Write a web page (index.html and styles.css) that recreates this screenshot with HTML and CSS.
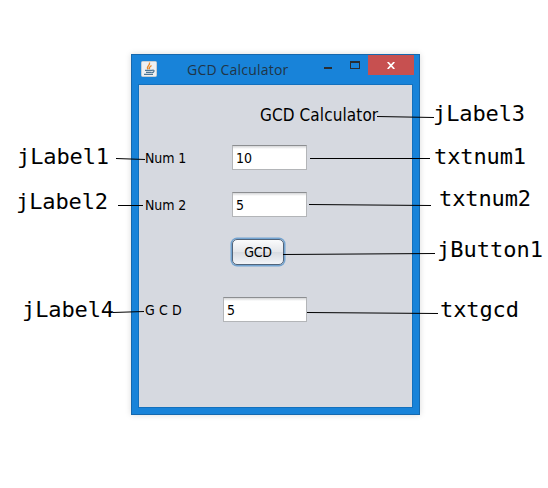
FILE: index.html
```html
<!DOCTYPE html>
<html lang="en">
<head>
<meta charset="utf-8">
<title>GCD Calculator</title>
<link rel="stylesheet" href="styles.css">
</head>
<body>
<main class="window">
  <header class="titlebar">
    <svg class="java" viewBox="0 0 16 16" width="16" height="16">
      <rect x=".5" y=".5" width="15" height="15" rx="1" fill="#eef0f2" stroke="#c8cdd0"/>
      <path d="M7 8.300C4.500 6 9.500 4.500 8.500 1.500M8.500 8.300C7.500 6.500 9 5.500 10.500 4.500" fill="none" stroke="#e8892b" stroke-width="1.300"/>
      <path d="M4 9.300H11M11 9.300c3-.8 2.500 2-.3 2.300M5 11.300H10.500M3 13.300H12" fill="none" stroke="#4f7694" stroke-width="1.200"/>
    </svg>
    <h1 class="caption">GCD Calculator</h1>
    <svg class="controls" viewBox="0 0 50 20" width="50" height="20">
      <rect x="6" y="12" width="8" height="2" fill="#292d31"/>
      <path d="M32 6h10v8h-10zM33 8v5h8v-5z" fill="#292d31" fill-rule="evenodd"/>
    </svg>
    <div class="close">
      <svg viewBox="0 0 8 7" width="8" height="7"><path d="M.7 0L7.300 7M7.300 0L.7 7" stroke="#fff" stroke-width="1.700"/></svg>
    </div>
  </header>
  <section class="pane">
    <h2 class="heading">GCD Calculator</h2>
    <div class="row first"><label class="name">Num 1</label><div class="field">10</div></div>
    <div class="row"><label class="name">Num 2</label><div class="field">5</div></div>
    <button class="action">GCD</button>
    <div class="row result"><label class="name spaced">G C D</label><div class="field wide">5</div></div>
  </section>
</main>
<svg class="notes" viewBox="0 0 548 488" width="548" height="488">
  <g class="leaders">
    <path d="M377 116.500L434 117.500M116 158.500L145 159.500M118 205.500H143M310 158.500H430M309 204.500L431 205.500M283 254.500L435 253.500M307 312.500L438 313.500M113 312.500L144 311.500"/>
  </g>
  <g class="tags">
    <text x="17" y="164" textLength="92">jLabel1</text>
    <text x="16" y="209" textLength="92">jLabel2</text>
    <text x="433" y="121" textLength="92">jLabel3</text>
    <text x="22" y="317" textLength="92">jLabel4</text>
    <text x="434" y="164" textLength="92">txtnum1</text>
    <text x="439" y="206" textLength="92">txtnum2</text>
    <text x="437" y="257" textLength="106">jButton1</text>
    <text x="440" y="317" textLength="79">txtgcd</text>
  </g>
</svg>
</body>
</html>
```
FILE: styles.css
```css
* { box-sizing: border-box; }
body {
  margin: 0;
  padding: 54px 0 0 131px;
  width: 548px;
  height: 488px;
  overflow: hidden;
  background: #fff;
  color: #000;
  font-family: "DejaVu Sans Condensed", "DejaVu Sans", sans-serif;
  font-stretch: condensed;
}
.window {
  width: 289px;
  height: 361px;
  padding: 0 6px 6px;
  border: 1px solid #1668ad;
  background: #1883d9;
  box-shadow: 0 0 6px rgba(0, 0, 0, .15);
}
.titlebar { display: flex; height: 29px; align-items: flex-start; }
.java { margin: 6px 0 0 3px; }
.caption {
  width: 131px;
  margin: 5px 0 0 30px;
  font: 14px/20px "Open Sans", sans-serif;
  letter-spacing: .2px;
  color: #203547;
  white-space: nowrap;
}
.controls { margin-left: 0; }
.close {
  display: flex;
  width: 46px;
  height: 20px;
  margin-left: auto;
  margin-right: -1px;
  align-items: center;
  justify-content: center;
  background: #c75050;
}
.pane {
  height: 324px;
  border: 1px solid #1370bd;
  background: #d6d9e0;
  padding: 18px 0 0 6px;
}
.heading {
  margin: 0 0 0 115px;
  font-size: 17px;
  line-height: 24px;
  font-weight: 400;
  letter-spacing: .1px;
  white-space: nowrap;
}
.row { display: flex; height: 25px; align-items: center; margin-top: 22px; }
.first { margin-top: 18px; }
.name { width: 87px; font-size: 14px; letter-spacing: -.1px; }
.field {
  width: 75px;
  height: 25px;
  padding-left: 3px;
  border: 1px solid #b3b5b8;
  border-top-color: #8c8e91;
  background: linear-gradient(#d4d5d7, #fff 3px);
  font-size: 14px;
  line-height: 24px;
}
.action {
  display: block;
  width: 52px;
  height: 26px;
  margin: 22px 0 0 87px;
  padding: 0;
  border: 1px solid #52647a;
  border-radius: 5px;
  background: linear-gradient(#fafbfc, #e5e7eb 48%, #d8dbe1 52%, #f2f4f8);
  box-shadow: 0 0 0 1.500px #73a4d1;
  color: #000;
  font: 14px/22px "DejaVu Sans Condensed", "DejaVu Sans", sans-serif;
  letter-spacing: -.3px;
}
.result { margin-top: 32px; }
.spaced { width: 78px; letter-spacing: .1px; }
.wide { width: 84px; }
.notes { position: absolute; left: 0; top: 0; pointer-events: none; }
.leaders { fill: none; stroke: #000; stroke-width: 1; }
.tags { font: 22px "DejaVu Sans Mono", monospace; fill: #000; }
```
